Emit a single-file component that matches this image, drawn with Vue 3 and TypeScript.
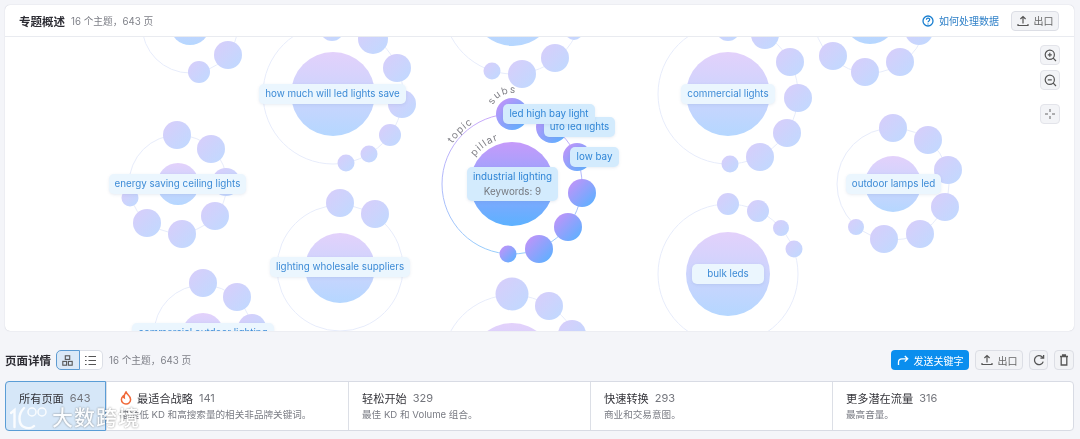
<script setup lang="ts">
interface Bubble { x: number; y: number; r: number }
interface Cluster { x: number; y: number; pillar: number; ring: number; subs: number[][]; active?: boolean }
interface Tag { text: string; x: number; y: number; w: number; h?: number; note?: string; active?: boolean; pale?: boolean }

const clusters: Cluster[] = [
  { x: 190, y: 24, pillar: 20, ring: 48, subs: [[228, 54, 14], [199, 71, 11]] },
  { x: 333, y: 93, pillar: 42, ring: 70, subs: [[332, 28, 12], [373, 38, 15], [397, 67, 14], [402, 103, 14], [390, 134, 11], [369, 153, 8.5], [346, 162, 8.5]] },
  { x: 178, y: 183, pillar: 21, ring: 49, subs: [[177, 134, 14], [211, 148, 14], [226, 181, 14], [215, 215, 14], [182, 233, 14], [147, 222, 14], [130, 197, 8.5]] },
  { x: 340, y: 267, pillar: 35, ring: 63, subs: [[340, 202, 14], [375, 213, 14]] },
  { x: 203, y: 333, pillar: 21, ring: 49, subs: [[203, 282, 14], [237, 296, 14], [252, 327, 14]] },
  { x: 513, y: 3, pillar: 42, ring: 70, subs: [[492, 70, 8.5], [522, 73, 14], [555, 57, 14], [574, 30, 9]] },
  { x: 512, y: 364, pillar: 42, ring: 70, subs: [[512, 293, 16.5], [549, 305, 14], [572, 333, 14]] },
  { x: 728, y: 93, pillar: 42, ring: 70, subs: [[728, 28, 12], [765, 34, 14], [790, 61, 14], [798, 97, 14], [787, 132, 14], [760, 156, 14], [730, 163, 8.5]] },
  { x: 870, y: 16, pillar: 27, ring: 56, subs: [[833, 55, 14], [865, 71, 14], [900, 61, 14], [919, 30, 14]] },
  { x: 893, y: 183, pillar: 28, ring: 56, subs: [[893, 127, 14], [928, 139, 14], [948, 169, 14], [945, 206, 14], [920, 233, 14], [884, 238, 14], [856, 226, 8]] },
  { x: 728, y: 273, pillar: 42, ring: 70, subs: [[728, 203, 11], [758, 210, 11], [781, 227, 8], [794, 248, 8.5]] },
  { x: 512, y: 183, pillar: 42, ring: 70, active: true, subs: [[512, 113, 16], [552, 126, 16], [577, 156, 14], [582, 192, 14], [568, 226, 14], [539, 248, 14], [508, 253, 8.5]] },
]

const tags: Tag[] = [
  { text: 'how much will led lights save', x: 259, y: 83, w: 147, pale: true },
  { text: 'energy saving ceiling lights', x: 109, y: 173, w: 137, pale: true },
  { text: 'lighting wholesale suppliers', x: 270, y: 256, w: 140, pale: true },
  { text: 'commercial outdoor lighting', x: 132, y: 322, w: 142, pale: true },
  { text: 'commercial lights', x: 681, y: 83, w: 94, pale: true },
  { text: 'outdoor lamps led', x: 846, y: 173, w: 95, pale: true },
  { text: 'bulk leds', x: 692, y: 263, w: 72, pale: true },
  { text: 'low bay', x: 570, y: 146, w: 49, active: true },
  { text: 'ufo led lights', x: 544, y: 116, w: 71, active: true },
  { text: 'led high bay light', x: 503, y: 103, w: 92, active: true },
  { text: 'industrial lighting', x: 467, y: 166, w: 91, h: 34, note: 'Keywords: 9', active: true },
]

const tabs = [
  { title: '最适合战略', count: 141, desc: '瞄准低 KD 和高搜索量的相关非品牌关键词。', hot: true },
  { title: '轻松开始', count: 329, desc: '最佳 KD 和 Volume 组合。' },
  { title: '快速转换', count: 293, desc: '商业和交易意图。' },
  { title: '更多潜在流量', count: 316, desc: '最高音量。' },
]

function bubbles(c: Cluster): Bubble[] {
  return c.subs.map(([x, y, r]) => ({ x, y, r }))
}

function tagStyle(t: Tag) {
  return {
    left: `${t.x - 5}px`,
    top: `${t.y - 36}px`,
    width: `${t.w}px`,
    height: `${t.h ?? 20}px`,
  }
}
</script>

<template>
  <div class="page">
    <section class="card">
      <header class="card-head">
        <h2>专题概述</h2>
        <span class="muted">16 个主题，643 页</span>
        <a class="help">
          <svg width="12" height="12" viewBox="0 0 12 12" fill="none" stroke="#1a7fd0">
            <circle cx="6" cy="6" r="5" stroke-width="1.3" />
            <path d="M4.4 4.8c0-2.1 3.3-2.1 3.3-.1 0 1.2-1.7 1.3-1.7 2.6" stroke-width="1.2" />
            <path d="M6 8.4v1" stroke-width="1.2" />
          </svg>
          如何处理数据
        </a>
        <button class="btn wide">
          <svg width="12" height="12" viewBox="0 0 12 12" fill="none" stroke="#555" stroke-width="1.2">
            <path d="M1 9v1.5h10V9M6 8.5V1.5M3.4 4 6 1.5 8.6 4" />
          </svg>
          出口
        </button>
      </header>

      <div class="canvas">
        <svg class="graph" width="1069" height="295" viewBox="5 36 1069 295">
          <defs>
            <linearGradient id="pale-pillar" x1="0" y1="0" x2="0" y2="1">
              <stop offset="0" stop-color="#e3d1fb" />
              <stop offset="1" stop-color="#b5d7ff" />
            </linearGradient>
            <linearGradient id="pale-sub" x1="0" y1="0" x2="1" y2="1">
              <stop offset="0" stop-color="#d9cdfa" />
              <stop offset="1" stop-color="#bfdaff" />
            </linearGradient>
            <linearGradient id="hot-pillar" x1="0" y1="0" x2="0" y2="1">
              <stop offset="0" stop-color="#c69afa" />
              <stop offset="1" stop-color="#5cb1ff" />
            </linearGradient>
            <linearGradient id="hot-sub" x1="0" y1="0" x2="1" y2="1">
              <stop offset="0.1" stop-color="#bf94f9" />
              <stop offset="0.9" stop-color="#5fb0ff" />
            </linearGradient>
            <linearGradient id="hot-ring" x1="0" y1="0" x2="0" y2="1">
              <stop offset="0" stop-color="#c9a8fa" />
              <stop offset="1" stop-color="#96cdfb" />
            </linearGradient>
            <path id="arc-topic" d="M440 183A72 72 0 0 1 512 111" />
            <path id="arc-pillar" d="M466 183A46 46 0 0 1 512 137" />
            <path id="arc-subs" d="M491 113A21 21 0 0 1 533 113" />
          </defs>

          <g v-for="(c, i) in clusters" :key="i">
            <circle
              :cx="c.x" :cy="c.y" :r="c.ring"
              fill="none"
              :stroke="c.active ? 'url(#hot-ring)' : '#e7ecfb'"
              stroke-width="1"
            />
            <circle :cx="c.x" :cy="c.y" :r="c.pillar" :fill="c.active ? 'url(#hot-pillar)' : 'url(#pale-pillar)'" />
            <circle
              v-for="(b, j) in bubbles(c)" :key="j"
              :cx="b.x" :cy="b.y" :r="b.r"
              :fill="c.active ? 'url(#hot-sub)' : 'url(#pale-sub)'"
            />
          </g>

          <text class="arc-label"><textPath href="#arc-topic" startOffset="43">topic</textPath></text>
          <text class="arc-label"><textPath href="#arc-pillar" startOffset="29">pillar</textPath></text>
          <text class="arc-label subs"><textPath href="#arc-subs" startOffset="9">subs</textPath></text>
        </svg>

        <div
          v-for="t in tags" :key="t.text"
          class="tag"
          :class="{ active: t.active, pale: t.pale }"
          :style="tagStyle(t)"
        >
          <span>{{ t.text }}</span>
          <small v-if="t.note">{{ t.note }}</small>
        </div>

        <div class="zoom-tools">
          <button class="tool">
            <svg width="13" height="13" viewBox="0 0 13 13" fill="none" stroke="#555" stroke-width="1.2">
              <circle cx="5.8" cy="5.8" r="4.6" /><path d="M9.2 9.2 12 12M3.8 5.8h4M5.8 3.8v4" />
            </svg>
          </button>
          <button class="tool">
            <svg width="13" height="13" viewBox="0 0 13 13" fill="none" stroke="#555" stroke-width="1.2">
              <circle cx="5.8" cy="5.8" r="4.6" /><path d="M9.2 9.2 12 12M3.8 5.8h4" />
            </svg>
          </button>
          <button class="tool center">
            <svg width="12" height="12" viewBox="0 0 12 12" fill="none" stroke="#666" stroke-width="1">
              <path d="M6 1v3M6 8v3M1 6h3M8 6h3" />
            </svg>
          </button>
        </div>
      </div>
    </section>

    <div class="detail-bar">
      <h3>页面详情</h3>
      <div class="toggle">
        <button class="on">
          <svg width="11" height="11" viewBox="0 0 11 11" fill="none" stroke="#555" stroke-width="1.1">
            <rect x="3.3" y=".8" width="4.4" height="3.6" /><rect x=".8" y="6.4" width="3.8" height="3.8" /><rect x="6.4" y="6.4" width="3.8" height="3.8" />
          </svg>
        </button>
        <button>
          <svg width="11" height="11" viewBox="0 0 11 11" fill="none" stroke="#555" stroke-width="1.1">
            <path d="M3.5 1.5H11M3.5 5.5H11M3.5 9.5H11M0 1.5h1.6M0 5.5h1.6M0 9.5h1.6" />
          </svg>
        </button>
      </div>
      <span class="muted">16 个主题，643 页</span>
      <div class="actions">
        <button class="send">
          <svg width="12" height="12" viewBox="0 0 12 12" fill="none" stroke="#fff" stroke-width="1.3">
            <path d="M1.5 11V8.2c0-2.2 1.4-3.4 3.5-3.4h5.5M7.8 2l2.9 2.8-2.9 2.8" />
          </svg>
          发送关键字
        </button>
        <button class="btn wide">
          <svg width="12" height="12" viewBox="0 0 12 12" fill="none" stroke="#555" stroke-width="1.2">
            <path d="M1 9v1.5h10V9M6 8.5V1.5M3.4 4 6 1.5 8.6 4" />
          </svg>
          出口
        </button>
        <button class="btn square">
          <svg width="12" height="12" viewBox="0 0 12 12" fill="none" stroke="#555" stroke-width="1.3">
            <path d="M10.2 7.6A4.5 4.5 0 1 1 9 2.8l1.4 1.2M10.6 1v3.2H7.4" />
          </svg>
        </button>
        <button class="btn square last">
          <svg width="12" height="12" viewBox="0 0 12 12" fill="none" stroke="#555" stroke-width="1.3">
            <path d="M2 2.5h8M4.6 2.5V1h2.8v1.5M3.2 2.5v8.5h5.6V2.5" />
          </svg>
        </button>
      </div>
    </div>

    <nav class="tabs">
      <div class="tab first">
        <div class="tab-title">所有页面<em>643</em></div>
      </div>
      <div v-for="t in tabs" :key="t.title" class="tab">
        <div class="tab-title">
          <svg v-if="t.hot" class="flame" width="12" height="14" viewBox="0 0 12 14" fill="none" stroke="#f0693a" stroke-width="1.5">
            <path d="M6 1c.4 2.2 4.6 3.6 4.6 7.4A4.5 4.5 0 0 1 6 13a4.5 4.5 0 0 1-4.6-4.5c0-1.6.8-2.7 1.7-3.5.2 1 .6 1.6 1.2 1.9C4 4.6 4.8 2.6 6 1Z" />
          </svg>
          {{ t.title }}<em>{{ t.count }}</em>
        </div>
        <p>{{ t.desc }}</p>
      </div>
    </nav>

    <div class="watermark">
      <svg width="38" height="24" viewBox="0 0 38 24" fill="none" stroke="#fff" stroke-width="2.4" stroke-linecap="round">
        <path d="M1 7 4.5 4v17M14 2C8 8 8 18 14 21c4 2 8 1 10-1" />
        <circle cx="22" cy="6" r="4" stroke-width="1.5" />
        <circle cx="32" cy="6" r="4" stroke-width="1.5" />
      </svg>
      <span>大数跨境</span>
    </div>
  </div>
</template>

<style>
html, body {
  background: #f4f5f9;
}
</style>

<style scoped>
.page {
  position: relative;
  width: 1080px;
  height: 439px;
  overflow: hidden;
  box-sizing: border-box;
  padding: 5px 6px 0 5px;
  background: #f4f5f9;
  font-family: Inter, "Noto Sans CJK SC", sans-serif;
  color: #333;
  filter: blur(0.4px);
}

button {
  font-family: inherit;
  cursor: pointer;
}

.card {
  height: 326px;
  background: #fff;
  border-radius: 5px;
  box-shadow: 0 0 1px rgba(60, 70, 100, 0.35);
  display: flex;
  flex-direction: column;
  overflow: hidden;
}

.card-head {
  height: 31px;
  flex: none;
  display: flex;
  align-items: center;
  padding: 0 15px 0 14px;
  border-bottom: 1px solid #e9ebf0;
}

h2, h3 {
  margin: 0;
  font-size: 11.5px;
  font-weight: 700;
  color: #2c2c33;
}

.muted {
  font-size: 9.7px;
  color: #7d7f87;
  margin-left: 6px;
}

.help {
  margin-left: auto;
  display: flex;
  align-items: center;
  gap: 5px;
  font-size: 10px;
  color: #2f80c8;
  margin-right: 12px;
}

.btn {
  height: 20px;
  box-sizing: border-box;
  display: inline-flex;
  align-items: center;
  justify-content: center;
  gap: 5px;
  padding: 0;
  background: #f2f3f6;
  border: 1px solid #dcdee5;
  border-radius: 4px;
  font-size: 10px;
  color: #666;
}

.btn.wide { width: 48px; }
.btn.square { width: 19px; }
.btn.square.last { width: 20px; }

.canvas {
  position: relative;
  flex: 1;
  overflow: hidden;
}

.graph {
  display: block;
}

.arc-label {
  font-size: 10px;
  letter-spacing: 1.2px;
  fill: #808087;
}

.arc-label.subs {
  letter-spacing: 1.4px;
}

.tag {
  position: absolute;
  display: flex;
  flex-direction: column;
  align-items: center;
  justify-content: center;
  border-radius: 5px;
  font-size: 9.8px;
  line-height: 14px;
  color: #3d8bd6;
  white-space: nowrap;
  box-shadow: 0 1px 3px rgba(90, 120, 170, 0.14);
}

.tag.pale { background: #ebf6fe; }
.tag.active { background: #d3ebfd; color: #2f85d6; }

.tag small {
  font-size: 9.8px;
  color: #76797f;
  line-height: 15px;
}

.zoom-tools {
  position: absolute;
  top: 8px;
  right: 14px;
  display: flex;
  flex-direction: column;
  gap: 5px;
}

.tool {
  width: 20px;
  height: 20px;
  padding: 0;
  display: flex;
  align-items: center;
  justify-content: center;
  background: #f3f4f7;
  border: 1px solid #e3e4ea;
  border-radius: 4px;
}

.tool.center {
  margin-top: 9px;
}

.detail-bar {
  height: 20px;
  margin-top: 19px;
  display: flex;
  align-items: center;
}

.toggle {
  display: flex;
  margin-left: 5px;
}

.toggle button {
  width: 23.5px;
  height: 20px;
  padding: 0;
  display: flex;
  align-items: center;
  justify-content: center;
  background: #fff;
  border: 1px solid #dcdfe6;
  border-left: 0;
  border-radius: 0 5px 5px 0;
}

.toggle button.on {
  background: #dbe9f7;
  border: 1px solid #5d9bd2;
  border-radius: 5px 0 0 5px;
}

.actions {
  margin-left: auto;
  display: flex;
  gap: 6px;
}

.send {
  width: 78px;
  height: 20px;
  padding: 0;
  display: flex;
  align-items: center;
  justify-content: center;
  gap: 5px;
  background: #0a8eee;
  border: 0;
  border-radius: 4px;
  font-size: 10px;
  color: #fff;
}

.tabs {
  height: 50px;
  box-sizing: border-box;
  margin-top: 11px;
  display: grid;
  grid-template-columns: 100px 242px 242px 242px 1fr;
  background: #fff;
  border: 1px solid #d8dbe4;
  border-radius: 4px;
}

.tab {
  padding: 7px 0 0 13px;
  border-left: 1px solid #dcdfe6;
}

.tab.first {
  margin: -1px 0 -1px -1px;
  padding: 7px 0 0 13px;
  background: #d6e7f8;
  border: 1px solid #5a9dd6;
  border-radius: 4px 0 0 4px;
}

.tab-title {
  display: flex;
  align-items: center;
  height: 18px;
  font-size: 11.2px;
  color: #34343a;
}

.tab-title em {
  font-style: normal;
  font-size: 11px;
  color: #73757c;
  margin-left: 6px;
}

.flame {
  margin-right: 5px;
}

.tab p {
  margin: 1px 0 0;
  font-size: 9.6px;
  line-height: 14px;
  color: #7a7c84;
  white-space: nowrap;
}

.watermark {
  position: absolute;
  left: 10px;
  top: 406px;
  display: flex;
  align-items: center;
  gap: 4px;
  opacity: 0.88;
  pointer-events: none;
}

.watermark span {
  font-size: 21px;
  font-weight: 500;
  line-height: 24px;
  letter-spacing: 1px;
  color: #fff;
  text-shadow: 0 0 2px rgba(70, 70, 70, 0.75);
}
</style>
